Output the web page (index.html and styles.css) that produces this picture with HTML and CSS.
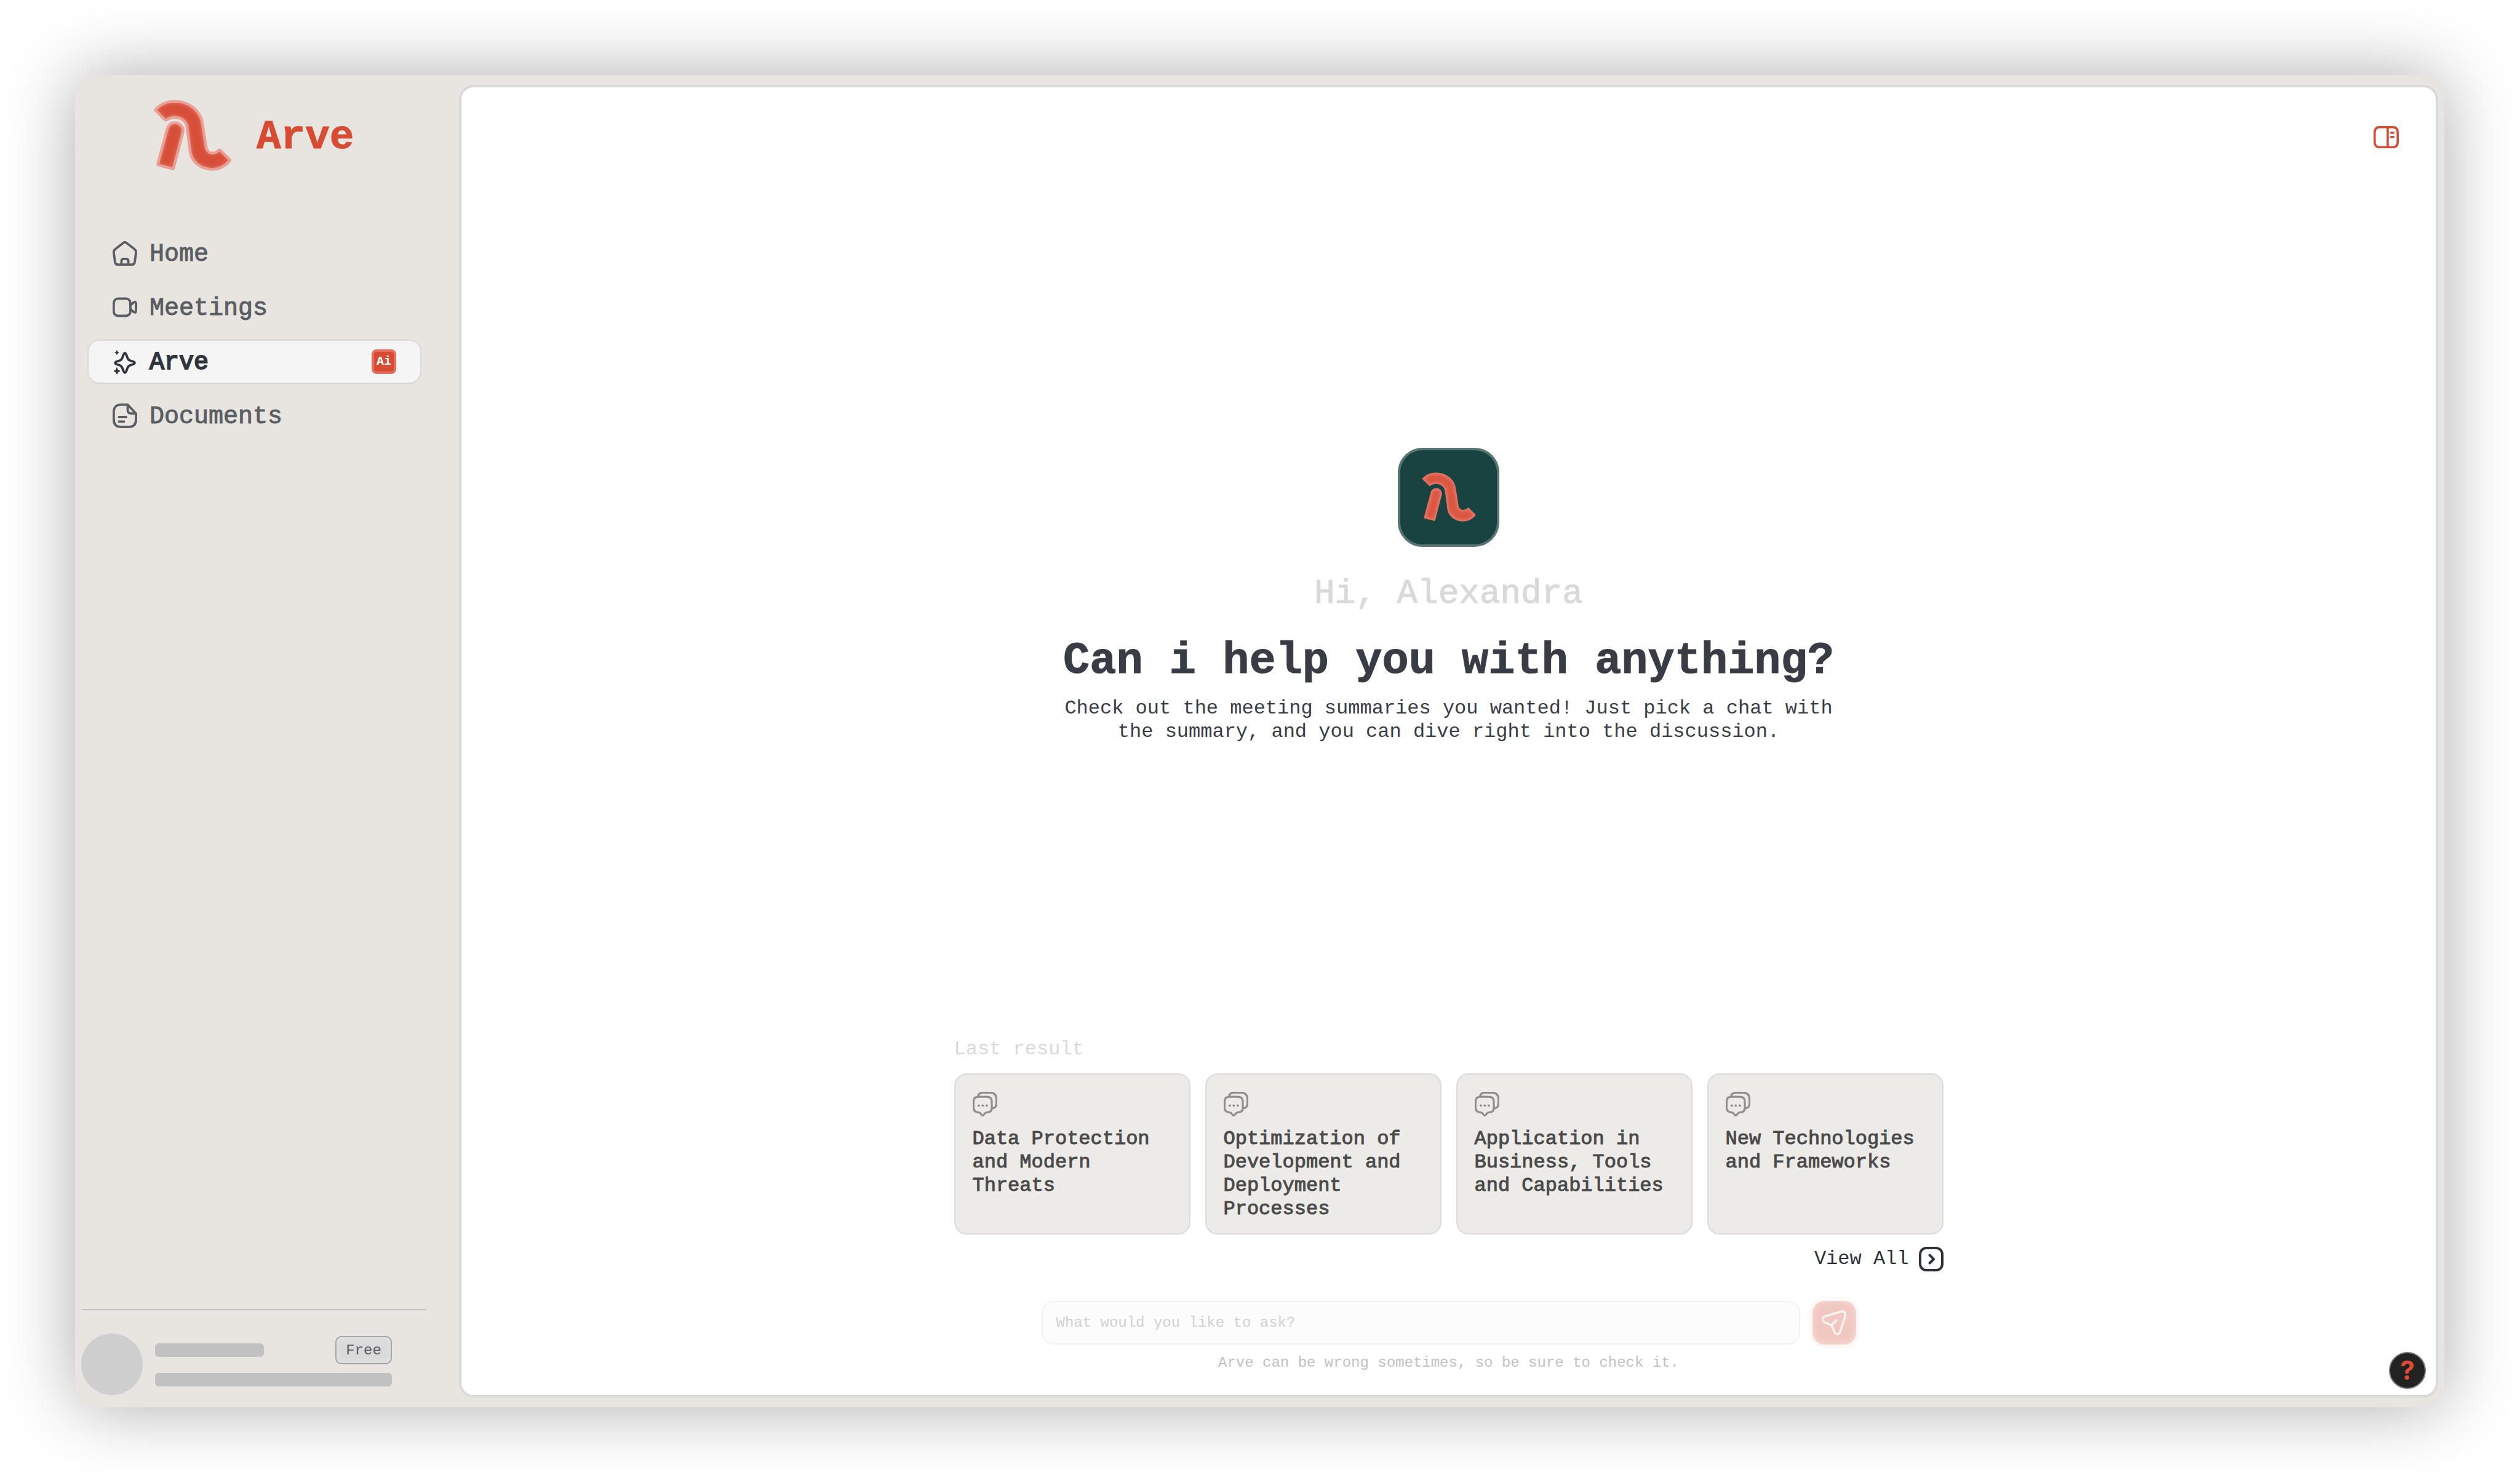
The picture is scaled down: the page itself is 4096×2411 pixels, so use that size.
FILE: index.html
```html
<!DOCTYPE html>
<html lang="en">
<head>
<meta charset="utf-8">
<meta name="viewport" content="width=device-width, initial-scale=1">
<title>Arve</title>
<link rel="stylesheet" href="styles.css">
</head>
<body>
<svg class="defs" aria-hidden="true">
  <defs>
    <path id="mark-wave" d="M3 34C22 13 49 1 79 1C137 1 187 40 192 95L206 185C208 200 219 211 232 211C242 211 251 206 258 200Q262 197 265 200L302 237Q304 240 301 243C283 263 260 276 232 276C186 276 148 245 143 205L130 105C127 82 107 65 79 65C68 65 57 69 48 75Q43 78 39 74L3 38Q1 36 3 34Z"/>
    <path id="mark-leg" d="M50 112C54 98 66 88 80 88C100 88 117 105 112 127L75 270Q73 275 69 273L15 259Q11 257 12 253Z"/>
    <clipPath id="mark-clip"><use href="#mark-wave"/><use href="#mark-leg"/></clipPath>
    <filter id="soften" x="-20%" y="-20%" width="140%" height="140%"><feGaussianBlur stdDeviation="7"/></filter>
    <symbol id="chat" viewBox="0 0 40 40">
      <path d="M9 8.2H23Q31 8.2 31 16V26Q31 33.3 24 33.3Q21.500 33.300 20 35L17.500 38Q16.200 39.400 15 38L12.500 35Q11 33.300 9 33.300Q1.400 33 1.400 25.500V16Q1.400 8.200 9 8.200ZM8.500 7.500Q10 1.400 16 1.400H28Q38.600 1.400 38.600 12V19Q38.600 26 32 27" fill="none" stroke="currentColor" stroke-width="3.2" stroke-linejoin="round"/>
      <circle cx="9.800" cy="22.300" r="1.900" fill="currentColor"/><circle cx="16.300" cy="22.300" r="1.900" fill="currentColor"/><circle cx="22.800" cy="22.300" r="1.900" fill="currentColor"/>
    </symbol>
  </defs>
</svg>

<div class="window">
  <aside class="sidebar">
    <a class="brand" href="#">
      <svg class="brand-mark" viewBox="-6 -6 316 289" aria-hidden="true">
        <g fill="#d84f39" stroke="#eba096" stroke-width="12" stroke-linejoin="round"><use href="#mark-wave"/><use href="#mark-leg"/></g>
        <g clip-path="url(#mark-clip)">
          <g fill="#d84f39"><use href="#mark-wave"/><use href="#mark-leg"/></g>
          <g fill="none" stroke="#dd7869" stroke-width="14" filter="url(#soften)"><use href="#mark-wave"/><use href="#mark-leg"/></g>
        </g>
        <g fill="none" stroke="#eba096" stroke-width="10" stroke-linejoin="round"><use href="#mark-wave"/><use href="#mark-leg"/></g>
      </svg>
      <span class="brand-name">Arve</span>
    </a>

    <nav class="nav" aria-label="Main">
      <a class="nav-item" href="#">
        <svg class="icon" viewBox="0 0 40 40" aria-hidden="true"><path d="M18 2.600Q20 1.200 22 2.600L35 12.500Q38.600 15.200 38.100 19L36 34Q35.400 38.200 31.500 38.200H8.500Q4.600 38.200 4 34L1.900 19Q1.400 15.200 5 12.500ZM14.400 38V32.500Q14.400 28.800 18 28.800H22Q25.600 28.800 25.600 32.500V38"/></svg>
        <span class="nav-label">Home</span>
      </a>
      <a class="nav-item" href="#">
        <svg class="icon" viewBox="0 0 40 40" aria-hidden="true"><rect x="1.900" y="5.500" width="27" height="28" rx="7"/><path d="M28.900 16.500L34 11.800Q38.100 9.400 38.100 13.500V25.500Q38.100 29.500 34 27L28.900 22.500"/></svg>
        <span class="nav-label">Meetings</span>
      </a>
      <a class="nav-item nav-item-active" href="#" aria-current="page">
        <svg class="icon" viewBox="0 0 40 40" aria-hidden="true"><path d="M18 8Q20 4 22 8L24.500 14.500Q25.500 17 28 18L34 20Q38 22 34 24L28 26Q25.500 27 24.500 29.500L22 36Q20 40 18 36L15.500 29.500Q14.500 27 12 26L6 24Q2 22 6 20L12 18Q14.500 17 15.500 14.500Z"/><path class="solid" d="M7 2L8 4.400L10.200 5.300L8 6.200L7 8.600L6 6.200L3.800 5.300L6 4.400ZM7 30L8.600 33.500L12 35.200L8.600 36.900L7 40.400L5.400 36.900L2 35.200L5.400 33.500Z"/></svg>
        <span class="nav-label">Arve</span>
        <span class="ai-badge">Ai</span>
      </a>
      <a class="nav-item" href="#">
        <svg class="icon" viewBox="0 0 40 40" aria-hidden="true"><path d="M24.500 1.900H14Q1.900 1.900 1.900 14V26Q1.900 38.100 14 38.100H26Q38.100 38.100 38.100 26V16.500ZM24.500 2V10.500Q24.500 16.200 30 16.200H38M10.500 22H22M10.500 29.400H18.500"/></svg>
        <span class="nav-label">Documents</span>
      </a>
    </nav>

    <div class="account">
      <div class="avatar"></div>
      <div class="account-info">
        <div class="account-row">
          <div class="skeleton skeleton-name"></div>
          <span class="plan">Free</span>
        </div>
        <div class="skeleton"></div>
      </div>
    </div>
  </aside>

  <main class="panel">
    <header class="toolbar">
      <button class="icon-button" type="button" aria-label="Toggle side panel">
        <svg class="panel-icon" viewBox="0 0 41 36" aria-hidden="true"><path d="M10 1.600H31Q39.200 1.600 39.200 10V26Q39.200 34.400 31 34.400H10Q1.800 34.400 1.800 26V10Q1.800 1.600 10 1.600ZM23 2V34M28.500 10.700H32.300M28.500 17.800H32.300"/></svg>
      </button>
    </header>

    <section class="hero">
      <div class="tile">
        <svg class="tile-mark" viewBox="0 0 304 277" aria-hidden="true">
          <g clip-path="url(#mark-clip)">
            <g fill="#db5742"><use href="#mark-wave"/><use href="#mark-leg"/></g>
            <g fill="none" stroke="#e27d6e" stroke-width="18" filter="url(#soften)"><use href="#mark-wave"/><use href="#mark-leg"/></g>
          </g>
        </svg>
      </div>
      <p class="greeting">Hi, Alexandra</p>
      <h1 class="title">Can i help you with anything?</h1>
      <p class="lead">Check out the meeting summaries you wanted! Just pick a chat with the summary, and you can dive right into the discussion.</p>
    </section>

    <section class="results">
      <h2 class="results-title">Last result</h2>
      <div class="cards">
        <a class="card" href="#"><svg class="card-icon" aria-hidden="true"><use href="#chat"/></svg><span>Data Protection and Modern Threats</span></a>
        <a class="card" href="#"><svg class="card-icon" aria-hidden="true"><use href="#chat"/></svg><span>Optimization of Development and Deployment Processes</span></a>
        <a class="card" href="#"><svg class="card-icon" aria-hidden="true"><use href="#chat"/></svg><span>Application in Business, Tools and Capabilities</span></a>
        <a class="card" href="#"><svg class="card-icon" aria-hidden="true"><use href="#chat"/></svg><span>New Technologies and Frameworks</span></a>
      </div>
      <a class="view-all" href="#">View All
        <svg class="view-all-icon" viewBox="0 0 40 40" aria-hidden="true"><rect x="2" y="2" width="36" height="36" rx="10"/><path d="M17.500 13.500L24 20L17.500 26.500"/></svg>
      </a>
    </section>

    <form class="ask">
      <div class="ask-row">
        <input class="ask-input" type="text" placeholder="What would you like to ask?" aria-label="What would you like to ask?">
        <button class="send" type="button" aria-label="Send">
          <svg class="send-icon" viewBox="0 0 40 41" aria-hidden="true"><path d="M31 2.300C36 .6 39.600 4 38 9.500L30 35C28.300 40.300 22.500 40.300 20.500 35L17 27Q16 24.500 13.500 23.500L5 19.800C0 17.500 0 11.800 5.500 10ZM16 24.500L24 16.200"/></svg>
        </button>
      </div>
      <p class="disclaimer">Arve can be wrong sometimes, so be sure to check it.</p>
    </form>

    <button class="help" type="button" aria-label="Help">?</button>
  </main>
</div>
</body>
</html>
```
FILE: styles.css
```css
:root {
  --accent: #d84b33;
  --ink: #383c45;
  --muted: #5a5e63;
  --faint: #d9d9d9;
  --mono: "Liberation Mono", "Courier New", monospace;
}

* {
  box-sizing: border-box;
}

body {
  display: flex;
  min-height: 100vh;
  margin: 0;
  padding: 122px 123px 123px 122px;
  background: #fff;
  color: var(--ink);
  font-family: var(--mono);
  font-size: 32px;
  line-height: 38px;
}

h1,
h2,
p {
  margin: 0;
}

a {
  color: inherit;
  text-decoration: none;
}

button,
input {
  margin: 0;
  font-family: inherit;
}

button {
  padding: 0;
  border: 0;
  background: none;
  cursor: pointer;
}

svg {
  display: block;
  flex: none;
}

.defs {
  position: absolute;
  width: 0;
  height: 0;
}

.window {
  display: flex;
  flex: 1;
  min-width: 0;
  padding: 16px 10px 16px 0;
  border-radius: 36px;
  background: #e8e5e0;
  box-shadow: 0 0 116px rgba(0, 0, 0, 0.33);
}

/* Sidebar */
.sidebar {
  display: flex;
  flex: none;
  flex-direction: column;
  width: 624px;
}

.brand {
  display: flex;
  align-items: center;
  gap: 40px;
  margin: 24px 0 98px 127px;
}

.brand-mark {
  width: 128px;
  height: 116px;
}

.brand-name {
  padding-top: 8px;
  color: var(--accent);
  font-size: 66px;
  font-weight: 700;
  line-height: 72px;
  -webkit-text-stroke: 1px;
}

.nav {
  display: flex;
  flex-direction: column;
  gap: 16px;
  margin: 0 61px 0 20px;
}

.nav-item {
  display: flex;
  align-items: center;
  gap: 20px;
  height: 72px;
  padding: 0 39px;
  border: 2px solid transparent;
  border-radius: 20px;
  color: var(--muted);
  font-size: 40px;
  line-height: 44px;
  -webkit-text-stroke: 1px;
}

.nav-item-active {
  border-color: var(--faint);
  background: #f5f5f5;
  color: #2f343d;
  -webkit-text-stroke: 2px;
}

.nav-label {
  flex: 1;
  padding-top: 4px;
}

.icon {
  width: 40px;
  height: 40px;
  fill: none;
  stroke: currentColor;
  stroke-width: 3.8;
  stroke-linecap: round;
  stroke-linejoin: round;
}

.solid {
  fill: currentColor;
  stroke-width: 1;
}

.ai-badge {
  width: 40px;
  height: 40px;
  border: 4px solid #e27060;
  border-radius: 8px;
  background: var(--accent);
  color: #fff;
  font-size: 20px;
  font-weight: 700;
  line-height: 32px;
  text-align: center;
  -webkit-text-stroke: 0;
}

.account {
  display: flex;
  gap: 20px;
  margin: auto 53px 4px 10px;
  padding: 38px 56px 0 0;
  border-top: 2px solid #c4c3c1;
}

.avatar {
  flex: none;
  width: 100px;
  height: 100px;
  border-radius: 50%;
  background: #cfcfcf;
}

.account-info {
  display: flex;
  flex: 1;
  flex-direction: column;
  gap: 14px;
  padding-top: 4px;
}

.account-row {
  display: flex;
  align-items: center;
  justify-content: space-between;
}

.skeleton {
  height: 22px;
  border-radius: 6px;
  background: #c1c1c1;
}

.skeleton-name {
  width: 177px;
}

.plan {
  width: 92px;
  height: 46px;
  border: 2px solid #a5a5a5;
  border-radius: 10px;
  background: #dadada;
  box-shadow: inset 0 0 8px #e9e9e9;
  color: var(--muted);
  font-size: 24px;
  line-height: 44px;
  text-align: center;
}

/* Main panel */
.panel {
  position: relative;
  display: flex;
  flex: 1;
  flex-direction: column;
  align-items: center;
  min-width: 0;
  padding-bottom: 36px;
  border: 4px solid #d9dada;
  border-radius: 24px;
  background: #fff;
}

.toolbar {
  display: flex;
  align-self: stretch;
  justify-content: flex-end;
  padding: 63px 60px 0;
}

.panel-icon {
  width: 41px;
  height: 36px;
  fill: none;
  stroke: var(--accent);
  stroke-width: 3.6;
  stroke-linecap: round;
}

.hero {
  display: flex;
  flex: 1;
  flex-direction: column;
  align-items: center;
  justify-content: center;
  padding-top: 8px;
  text-align: center;
}

.tile {
  display: flex;
  align-items: center;
  justify-content: center;
  width: 165px;
  height: 161px;
  border: 4px solid #587573;
  border-radius: 40px;
  background: #194340;
}

.tile-mark {
  width: 88px;
  height: 80px;
}

.greeting {
  margin-top: 44px;
  color: var(--faint);
  font-size: 56px;
  line-height: 64px;
  -webkit-text-stroke: 1px;
}

.title {
  margin-top: 36px;
  font-size: 72px;
  font-weight: 700;
  line-height: 84px;
  -webkit-text-stroke: 1px;
}

.lead {
  max-width: 1260px;
  margin-top: 16px;
}

.results {
  display: flex;
  flex-direction: column;
  width: 1608px;
  max-width: 100%;
}

.results-title {
  margin-bottom: 20px;
  color: var(--faint);
  font-size: 32px;
  font-weight: 400;
}

.cards {
  display: grid;
  grid-template-columns: repeat(4, 1fr);
  gap: 24px;
}

.card {
  display: flex;
  flex-direction: column;
  gap: 18px;
  padding: 28px 28px 20px;
  border: 2px solid #dcdcdc;
  border-radius: 20px;
  background: #ecebe7;
  color: #4a4a4a;
  -webkit-text-stroke: 1px;
}

.card-icon {
  width: 40px;
  height: 40px;
  color: #8f8e8c;
}

.view-all {
  display: flex;
  align-items: center;
  align-self: flex-end;
  gap: 16px;
  margin-top: 20px;
  color: #2c313a;
}

.view-all-icon {
  width: 40px;
  height: 40px;
  fill: none;
  stroke: currentColor;
  stroke-width: 4;
  stroke-linecap: round;
  stroke-linejoin: round;
}

.ask {
  display: flex;
  flex-direction: column;
  align-items: center;
  gap: 14px;
  width: 1324px;
  max-width: 100%;
  margin-top: 48px;
}

.ask-row {
  display: flex;
  align-self: stretch;
  gap: 20px;
}

.ask-input {
  flex: 1;
  min-width: 0;
  height: 71px;
  padding: 0 22px;
  border: 2px solid #f2f2f2;
  border-radius: 20px;
  background: #fcfcfc;
  color: var(--ink);
  font-size: 24px;
}

.ask-input::placeholder {
  color: #d0d0d0;
  opacity: 1;
}

.send {
  display: flex;
  flex: none;
  align-items: center;
  justify-content: center;
  width: 71px;
  height: 71px;
  border-radius: 20px;
  background: #f1c8c1;
  box-shadow: 0 0 0 6px #fef8f7, inset 0 0 12px #f8dfdb;
}

.send-icon {
  width: 40px;
  height: 41px;
  fill: none;
  stroke: #fdf3f1;
  stroke-width: 3.4;
  stroke-linecap: round;
  stroke-linejoin: round;
}

.disclaimer {
  color: #c0c1c5;
  font-size: 24px;
  line-height: 32px;
}

.help {
  position: absolute;
  right: 16px;
  bottom: 10px;
  width: 60px;
  height: 60px;
  border: 2px solid #777;
  border-radius: 50%;
  background: #222;
  color: #df4b35;
  font-family: Inter, sans-serif;
  font-size: 42px;
  font-weight: 700;
  line-height: 56px;
  text-align: center;
}
```
